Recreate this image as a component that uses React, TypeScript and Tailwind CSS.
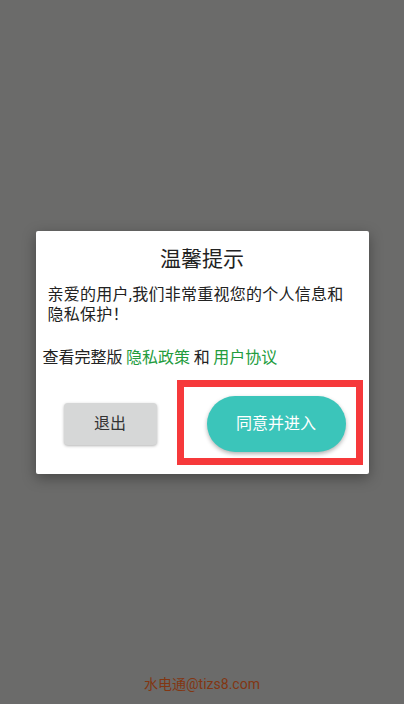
import React from 'react';

const font = { fontFamily: 'Roboto, "Noto Sans CJK SC", sans-serif' };
const cjk = { fontFamily: '"Noto Sans CJK SC", sans-serif' };

export default function App() {
  return (
    <div
      className="w-[404px] h-[704px] bg-[#6b6b6a] flex flex-col items-center"
      style={font}
    >
      <div className="pt-[231px]">
        {/* dialog */}
        <div className="relative w-[333px] h-[243px] bg-white rounded-[2px] shadow-[0_4px_14px_rgba(0,0,0,0.35)] flex flex-col">
          <h1 className="pt-[14px] text-center text-[21px] leading-[28px] text-[#222]">温馨提示</h1>
          <p className="mt-[12px] pl-[12px] w-[316px] text-[16px] leading-[20px] tracking-[0.25px] text-[#222]">
            亲爱的用户,我们非常重视您的个人信息和隐私保护！
          </p>
          <p className="mt-[19px] pl-[7px] text-[16px] leading-[24px] text-[#222] whitespace-nowrap" style={cjk}>
            查看完整版 <span className="text-[#239c3d]">隐私政策</span> 和 <span className="text-[#239c3d]">用户协议</span>
          </p>
          <div className="mt-[28px] ml-[28px] flex items-center gap-[50px]">
            <button className="w-[93px] h-[42px] rounded-[4px] bg-[#d6d7d7] text-[16px] text-[#333] shadow-[0_1px_3px_rgba(0,0,0,0.3)]">
              退出
            </button>
            <button className="w-[139px] h-[56px] rounded-full bg-[#3bc5ba] text-[16px] text-white shadow-[0_2px_4px_rgba(0,0,0,0.3)]">
              同意并进入
            </button>
          </div>
          {/* annotation box */}
          <div className="absolute left-[141px] top-[149px] w-[186px] h-[85px] border-[7px] border-[#f6393b]" />
        </div>
      </div>
      <div className="flex-1" />
      <p className="pb-[10px] text-[14px] leading-[20px] text-[#823612]">水电通@tizs8.com</p>
    </div>
  );
}
